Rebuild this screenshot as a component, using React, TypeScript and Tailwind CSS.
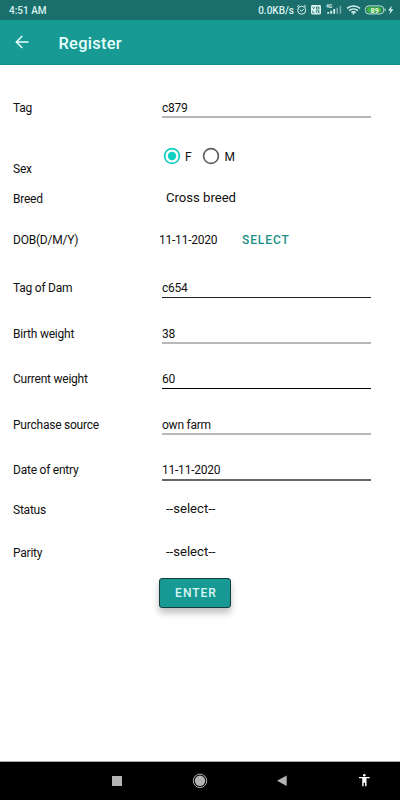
import React from 'react';

interface RowProps {
  label: string;
  rowClass: string;
  labelClass?: string;
  children: React.ReactNode;
}

function Row({ label, rowClass, labelClass = '', children }: RowProps) {
  return (
    <div className={`flex shrink-0 items-start pl-[13px] ${rowClass}`}>
      <span className={`w-[146px] shrink-0 ${labelClass}`}>{label}</span>
      {children}
    </div>
  );
}

function Field({ value, lineClass }: { value: string; lineClass: string }) {
  return <div className={`ml-[3px] w-[209px] box-content ${lineClass}`}>{value}</div>;
}

function Spinner({ value }: { value: string }) {
  return <span className="ml-[7px] -mt-px text-[13.1px] tracking-normal">{value}</span>;
}

function Radio({ label, checked }: { label: string; checked?: boolean }) {
  return (
    <div className="flex items-center">
      <svg width="18" height="18" viewBox="0 0 18 18" fill="none">
        <circle cx="9" cy="9" r="7.4" stroke={checked ? '#0fcfbf' : '#606060'} strokeWidth="1.7" />
        {checked && <circle cx="9" cy="9" r="4.2" fill="#0fcfbf" />}
      </svg>
      <span className="ml-[4px] mt-px">{label}</span>
    </div>
  );
}

function StatusBar() {
  return (
    <div className="flex h-5 shrink-0 items-center bg-[#1a6f6d] pl-[9px] text-[10px] font-medium tracking-normal text-[#d9f3f0]">
      <span className="pt-px">4:51 AM</span>
      <span className="ml-auto pt-px">0.0KB/s</span>
      <svg width="104" height="14" viewBox="294 3 104 14" fill="none" className="mr-[2px]">
        {/* alarm */}
        <g stroke="#d9f3f0" strokeWidth="1">
          <circle cx="301.7" cy="10.2" r="4" />
          <path d="M299.8 9.6l1.7 1.7 2.3-2.4M297.2 6.8l2-1.8M306.2 6.8l-2-1.8" />
        </g>
        {/* VoLTE */}
        <rect x="311" y="5" width="10" height="9.5" rx="1.4" fill="#d9f3f0" />
        <path d="M312.5 6.8l1.2 2 1.2-2M316.5 7h2.5v2h-2.5zM312.7 10.6v2.2h1.8M315.7 10.7h2M316.7 10.7v2.3M319.8 10.7h-1.3v2.1h1.3" stroke="#1a6f6d" strokeWidth=".8" />
        {/* signal */}
        <text x="326" y="8" fontSize="5" fontWeight="700" fill="#d9f3f0">4G</text>
        <path d="M328.2 13.7v-1.8M331.2 13.7v-3M334.2 13.7V9" stroke="#d9f3f0" strokeWidth="1.8" />
        <path d="M337.2 13.7V7.8M340.4 13.7V5.8" stroke="#75aaa7" strokeWidth="1.6" />
        {/* wifi */}
        <g stroke="#d9f3f0" strokeWidth="1.5">
          <path d="M347 8.4c3.7-3.2 9.3-3.2 13 0M349.2 10.6c2.5-2.1 6.1-2.1 8.6 0M351.3 12.5c1.3-1 3.1-1 4.4 0" />
        </g>
        <circle cx="353.5" cy="13.4" r="1" fill="#d9f3f0" />
        {/* battery */}
        <rect x="365.4" y="5.9" width="18.2" height="8" rx="3.4" stroke="#c4e9d5" />
        <rect x="367" y="7.3" width="14.5" height="5.2" rx="2" fill="#3fb43a" />
        <path d="M385 8.5v2.8" stroke="#c4e9d5" />
        <text x="370.6" y="12.6" fontSize="7.2" fontWeight="700" fill="#e8fae8">89</text>
        <path d="M391.8 5.5l-3.6 5.1h2.2l-1 4 4-5.4h-2.4z" fill="#d9f3f0" />
      </svg>
    </div>
  );
}

function AppBar() {
  return (
    <div className="flex h-[45px] shrink-0 items-center border-b border-[#14908b] bg-[#179994] pl-[15px] text-[#e6fffc]">
      <svg width="14" height="14" viewBox="0 0 14 14" fill="none" stroke="#e6fffc" strokeWidth="1.5" className="-mt-px">
        <path d="M13.5 7H1.5M7.3 1L1.3 7l6 6" />
      </svg>
      <span className="ml-[29.5px] mt-[4px] text-[16.4px] font-medium tracking-[0.3px]">Register</span>
    </div>
  );
}

function NavBar() {
  return (
    <div className="h-[39px] shrink-0 border-t border-[#aaaaaa] bg-black">
      <svg width="400" height="38" viewBox="0 762 400 38">
        <rect x="112" y="776" width="10" height="10" fill="#b4b4b4" />
        <circle cx="200" cy="780.8" r="6.7" fill="none" stroke="#b4b4b4" strokeWidth="1" />
        <circle cx="200" cy="780.8" r="5.2" fill="#b4b4b4" />
        <path d="M277 780.8l9.7-5.3v10.6z" fill="#b4b4b4" />
        <circle cx="364.3" cy="775.3" r="1.3" fill="#fff" />
        <path d="M359 776.9h10.7v1.4h-3.2v8h-1.4v-3.6h-1.5v3.6h-1.4v-8H359z" fill="#fff" />
      </svg>
    </div>
  );
}

export default function App() {
  return (
    <div className="flex h-[800px] w-[400px] flex-col overflow-hidden bg-white font-['Roboto',sans-serif] text-[12px] leading-4 tracking-[-0.23px] text-[#111111]">
      <StatusBar />
      <AppBar />
      <main className="flex flex-1 flex-col pt-[35px]">
        <Row label="Tag" rowClass="h-[47px]">
          <Field value="c879" lineClass="h-4 border-b-2 border-[#b5b5b5]" />
        </Row>
        <Row label="Sex" rowClass="h-11" labelClass="pt-[14px]">
          <div className="ml-1 flex gap-[11px]">
            <Radio label="F" checked />
            <Radio label="M" />
          </div>
        </Row>
        <Row label="Breed" rowClass="h-[41px]">
          <Spinner value="Cross breed" />
        </Row>
        <Row label="DOB(D/M/Y)" rowClass="h-12">
          <span className="w-[83px]">11-11-2020</span>
          <button className="font-medium tracking-[0.9px] text-[#1b9088]">SELECT</button>
        </Row>
        <Row label="Tag of Dam" rowClass="h-[46px]">
          <Field value="c654" lineClass="h-[17px] border-b border-[#222222]" />
        </Row>
        <Row label="Birth weight" rowClass="h-[45px]">
          <Field value="38" lineClass="h-4 border-b-2 border-[#b9b9b9]" />
        </Row>
        <Row label="Current weight" rowClass="h-[46px]">
          <Field value="60" lineClass="h-[17px] border-b border-black" />
        </Row>
        <Row label="Purchase source" rowClass="h-[45px]">
          <Field value="own farm" lineClass="h-4 border-b-2 border-[#b9b9b9]" />
        </Row>
        <Row label="Date of entry" rowClass="h-10">
          <Field value="11-11-2020" lineClass="h-[17px] border-b-2 border-[#666666]" />
        </Row>
        <Row label="Status" rowClass="h-[43px]">
          <Spinner value="--select--" />
        </Row>
        <Row label="Parity" rowClass="h-[33px]">
          <Spinner value="--select--" />
        </Row>
        <button className="ml-[159px] h-[30px] w-[72px] rounded-[3px] border border-[#123f3d] bg-[#179994] pl-[2px] font-medium tracking-[1px] text-[#d9f7f4] shadow-[0_5px_7px_rgba(0,0,0,0.25)]">
          ENTER
        </button>
      </main>
      <NavBar />
    </div>
  );
}
